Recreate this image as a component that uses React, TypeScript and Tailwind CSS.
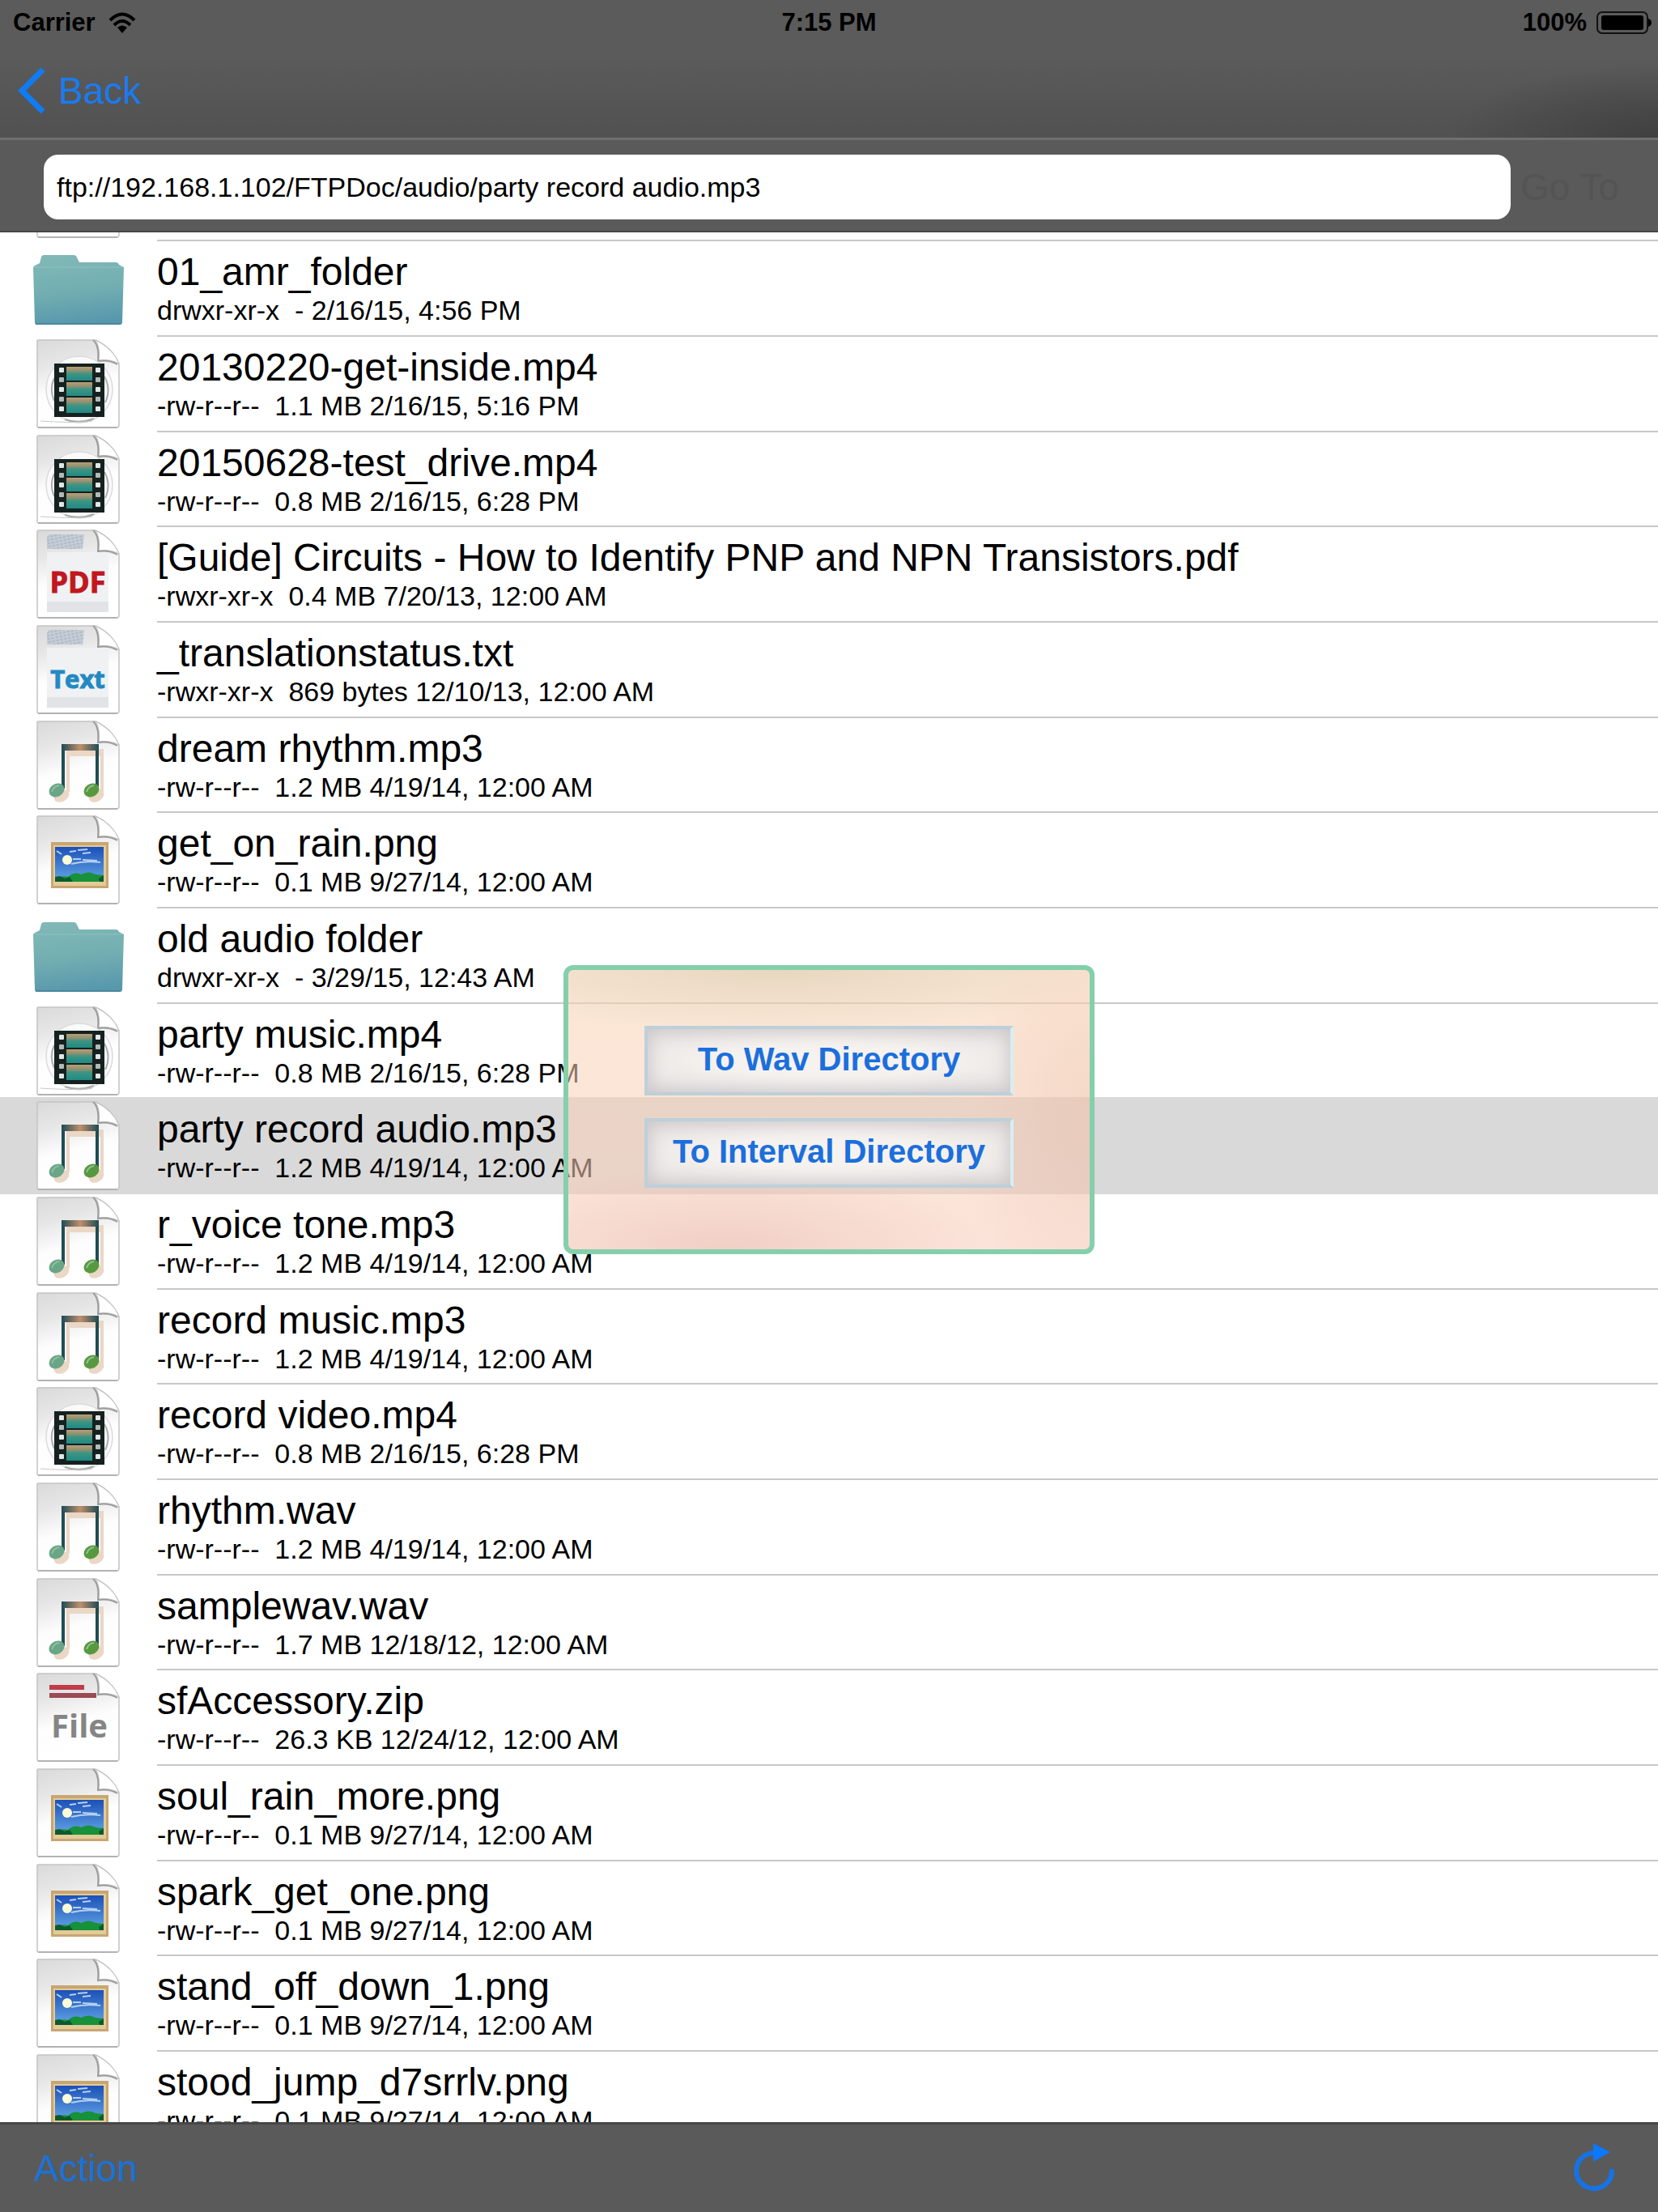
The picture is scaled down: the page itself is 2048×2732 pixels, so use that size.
import { useState } from "react";

type Kind = "folder" | "video" | "pdf" | "text" | "audio" | "image" | "file";

interface FileEntry {
  name: string;
  info: string;
  kind: Kind;
}

const files: FileEntry[] = [
  { name: "01_amr_folder", info: "drwxr-xr-x  - 2/16/15, 4:56 PM", kind: "folder" },
  { name: "20130220-get-inside.mp4", info: "-rw-r--r--  1.1 MB 2/16/15, 5:16 PM", kind: "video" },
  { name: "20150628-test_drive.mp4", info: "-rw-r--r--  0.8 MB 2/16/15, 6:28 PM", kind: "video" },
  {
    name: "[Guide] Circuits - How to Identify PNP and NPN Transistors.pdf",
    info: "-rwxr-xr-x  0.4 MB 7/20/13, 12:00 AM",
    kind: "pdf",
  },
  { name: "_translationstatus.txt", info: "-rwxr-xr-x  869 bytes 12/10/13, 12:00 AM", kind: "text" },
  { name: "dream rhythm.mp3", info: "-rw-r--r--  1.2 MB 4/19/14, 12:00 AM", kind: "audio" },
  { name: "get_on_rain.png", info: "-rw-r--r--  0.1 MB 9/27/14, 12:00 AM", kind: "image" },
  { name: "old audio folder", info: "drwxr-xr-x  - 3/29/15, 12:43 AM", kind: "folder" },
  { name: "party music.mp4", info: "-rw-r--r--  0.8 MB 2/16/15, 6:28 PM", kind: "video" },
  { name: "party record audio.mp3", info: "-rw-r--r--  1.2 MB 4/19/14, 12:00 AM", kind: "audio" },
  { name: "r_voice tone.mp3", info: "-rw-r--r--  1.2 MB 4/19/14, 12:00 AM", kind: "audio" },
  { name: "record music.mp3", info: "-rw-r--r--  1.2 MB 4/19/14, 12:00 AM", kind: "audio" },
  { name: "record video.mp4", info: "-rw-r--r--  0.8 MB 2/16/15, 6:28 PM", kind: "video" },
  { name: "rhythm.wav", info: "-rw-r--r--  1.2 MB 4/19/14, 12:00 AM", kind: "audio" },
  { name: "samplewav.wav", info: "-rw-r--r--  1.7 MB 12/18/12, 12:00 AM", kind: "audio" },
  { name: "sfAccessory.zip", info: "-rw-r--r--  26.3 KB 12/24/12, 12:00 AM", kind: "file" },
  { name: "soul_rain_more.png", info: "-rw-r--r--  0.1 MB 9/27/14, 12:00 AM", kind: "image" },
  { name: "spark_get_one.png", info: "-rw-r--r--  0.1 MB 9/27/14, 12:00 AM", kind: "image" },
  { name: "stand_off_down_1.png", info: "-rw-r--r--  0.1 MB 9/27/14, 12:00 AM", kind: "image" },
  { name: "stood_jump_d7srrlv.png", info: "-rw-r--r--  0.1 MB 9/27/14, 12:00 AM", kind: "image" },
];

// gradients shared by all the file icons
function IconDefs() {
  return (
    <svg className="absolute h-0 w-0" aria-hidden="true">
      <defs>
        <linearGradient id="page" x1="0" y1="0" x2="0.25" y2="1">
          <stop offset="0" stopColor="#dadada" />
          <stop offset="0.3" stopColor="#e6e6e6" />
          <stop offset="0.62" stopColor="#fdfdfd" />
          <stop offset="1" stopColor="#ffffff" />
        </linearGradient>
        <linearGradient id="folder" x1="0.4" y1="0" x2="0.55" y2="1">
          <stop offset="0" stopColor="#80b8b6" />
          <stop offset="0.5" stopColor="#72aeb1" />
          <stop offset="1" stopColor="#5797ad" />
        </linearGradient>
        <linearGradient id="frame" x1="0" y1="0" x2="0" y2="1">
          <stop offset="0" stopColor="#b99f78" />
          <stop offset="0.3" stopColor="#8f9070" />
          <stop offset="0.5" stopColor="#3f9583" />
          <stop offset="1" stopColor="#1f8a85" />
        </linearGradient>
        <linearGradient id="beam" x1="0" y1="0" x2="1" y2="0">
          <stop offset="0" stopColor="#1d4a56" />
          <stop offset="0.5" stopColor="#c08f6c" />
          <stop offset="1" stopColor="#1d4a56" />
        </linearGradient>
        <linearGradient id="sky" x1="0" y1="0" x2="0" y2="1">
          <stop offset="0" stopColor="#1c50b8" />
          <stop offset="1" stopColor="#63a6e6" />
        </linearGradient>
        <pattern id="print" width="5" height="4" patternUnits="userSpaceOnUse" patternTransform="rotate(-12)">
          <rect width="5" height="4" fill="#c4ccd5" />
          <rect width="3" height="2" fill="#b0bac6" />
        </pattern>
      </defs>
    </svg>
  );
}

function Page() {
  return (
    <>
      <path
        d="M7 1H78Q98 10 107 30V106Q107 109 104 109H8Q6 109 6 107V2Q6 1 7 1Z"
        fill="url(#page)"
        stroke="#c4c4c4"
        strokeWidth="1.5"
      />
      <path d="M7 109H105" stroke="#b2b2b2" strokeWidth="2" />
      <path d="M78 1Q84 10 82 26Q96 24 107 30Q100 12 78 1Z" fill="#ffffff" stroke="#c0c0c0" strokeWidth="1" />
      <path d="M75 1Q83 8 81 27Q95 25 105 31" fill="none" stroke="#9c9c9c" strokeWidth="2" />
    </>
  );
}

function Film() {
  return (
    <>
      <circle cx="58" cy="62" r="41" fill="#fafafa" stroke="#dcdcdc" strokeWidth="1.5" />
      <path d="M27 48a33 33 0 0 0 0 28M89 46a34 34 0 0 1 1 32M40 99q18 6 36-1" fill="none" stroke="#a9adab" strokeWidth="2" />
      <path d="M10 101Q58 104 74 101" fill="none" stroke="#c9c9c9" />
      <rect x="27" y="30" width="62" height="66" fill="#14211f" />
      <rect x="42" y="34" width="32" height="17" fill="url(#frame)" />
      <rect x="42" y="53" width="32" height="17" fill="url(#frame)" />
      <rect x="42" y="72" width="32" height="19" fill="url(#frame)" />
      {[35, 47, 59, 71, 83].map((y, i) => (
        <g key={y} fill={i % 2 ? "#b4b8b7" : "#e4e6e6"}>
          <rect x="33" y={y} width="6" height="6" rx="1" />
          <rect x="78" y={y} width="6" height="6" rx="1" />
        </g>
      ))}
    </>
  );
}

function Notes() {
  return (
    <>
      <g fill="#ead7c5">
        <path d="M42 35H88V44H46V88H42ZM84 35H88V88H84Z" />
        <ellipse cx="36" cy="93" rx="10" ry="7" transform="rotate(-28 36 93)" />
        <ellipse cx="79" cy="93" rx="10" ry="7" transform="rotate(-28 79 93)" />
      </g>
      <path d="M36 29H40V84H36ZM78 29H82V84H78Z" fill="#1f4d55" />
      <rect x="36" y="29" width="46" height="8" fill="url(#beam)" />
      <ellipse cx="30" cy="86" rx="10" ry="8" transform="rotate(-32 30 86)" fill="#69a587" />
      <ellipse cx="73" cy="86" rx="10" ry="8" transform="rotate(-32 73 86)" fill="#58993f" />
      <path d="M24 88q2-7 9-8M67 88q2-7 9-8" fill="none" stroke="#8fc09c" strokeWidth="2" />
    </>
  );
}

function Painting() {
  return (
    <>
      <rect x="23" y="33" width="71" height="57" fill="#c8a672" />
      <rect x="26" y="37" width="65" height="50" fill="#e3cb98" />
      <rect x="28" y="39" width="60" height="43" fill="url(#sky)" />
      <path
        d="M46 45L54 44M56 43L68 42M62 47L72 46M50 54H60M48 60Q64 56 84 58M62 55L80 56M30 44L36 48"
        fill="none"
        stroke="#b5d0f0"
        strokeWidth="2"
      />
      <circle cx="43" cy="55" r="6" fill="#fbfbd8" />
      <path d="M28 78Q36 74 44 76Q52 69 60 73Q70 68 78 73L88 74V82H28Z" fill="#17913a" />
      <path d="M28 76L34 75L40 78L46 76L50 82H28ZM82 78L88 74V82H83Z" fill="#0c5a2b" />
    </>
  );
}

function TextPanel() {
  return (
    <>
      <path d="M20 6H64L62 24H18V10Z" fill="url(#print)" />
      <rect x="18" y="28" width="76" height="74" fill="#f0f1f3" />
      <rect x="18" y="89" width="76" height="13" fill="#e1e3e6" />
    </>
  );
}

function FileIcon({ kind }: { kind: Kind }) {
  return (
    <svg
      viewBox="0 0 114 110"
      className="h-[110px] w-[114px] shrink-0 font-['Open_Sans','Noto_Sans',sans-serif] font-bold"
      aria-hidden="true"
    >
      {kind === "folder" ? (
        <>
          <path
            d="M9 24L11 16Q12 14 14 14H51Q54 14 55 17L58 23H103Q106 23 107 26L113 29L111 97Q111 100 108 100H6Q3 100 3 97L1 30Q1 28 3 27Z"
            fill="url(#folder)"
          />
          <path d="M3 29H111" stroke="#8cc3c0" strokeWidth="1" />
          <path d="M4 99H109" stroke="#4b879b" strokeWidth="2" />
        </>
      ) : (
        <Page />
      )}
      {kind === "video" && <Film />}
      {kind === "audio" && <Notes />}
      {kind === "image" && <Painting />}
      {kind === "pdf" && (
        <>
          <TextPanel />
          <text x="56" y="78" textAnchor="middle" fill="#c01820" stroke="#c01820" className="text-[36px]">
            PDF
          </text>
        </>
      )}
      {kind === "text" && (
        <>
          <TextPanel />
          <text x="56" y="78" textAnchor="middle" fill="#2389c2" stroke="#2389c2" className="text-[31px]">
            Text
          </text>
        </>
      )}
      {kind === "file" && (
        <>
          <rect x="21" y="15" width="43" height="6" fill="#c03c49" />
          <rect x="21" y="25" width="58" height="6" fill="#9c4a54" />
          <text x="58" y="80" textAnchor="middle" fill="#858585" className="text-[40px]">
            File
          </text>
        </>
      )}
    </svg>
  );
}

function StatusBar() {
  return (
    <div className="grid grid-cols-3 items-center px-4 pt-2 text-[31px] leading-10 font-bold text-black">
      <div className="flex items-center gap-4">
        Carrier
        <svg viewBox="0 0 34 26" className="h-[26px] w-[34px]" aria-hidden="true">
          <path d="M2 10Q17 -5 32 10M7 16Q17 6 27 16" fill="none" stroke="#000" strokeWidth="4" />
          <path d="M11 19Q17 14 23 19L17 26Z" fill="#000" />
        </svg>
      </div>
      <div className="text-center">7:15 PM</div>
      <div className="-mr-2 flex items-center justify-end gap-3">
        100%
        <svg viewBox="0 0 68 28" className="h-[28px] w-[68px]" aria-hidden="true">
          <rect x="1" y="1" width="62" height="26" rx="6" fill="none" stroke="#111" strokeWidth="2" />
          <rect x="6" y="5" width="52" height="18" rx="3" fill="#000" />
          <path d="M64 9Q68 10 68 14T64 19Z" fill="#000" />
        </svg>
      </div>
    </div>
  );
}

export default function App() {
  const [url, setUrl] = useState("ftp://192.168.1.102/FTPDoc/audio/party record audio.mp3");
  const [selected, setSelected] = useState("party record audio.mp3");

  return (
    <div className="relative flex h-screen flex-col overflow-hidden bg-white font-['Liberation_Sans',Arial,sans-serif] text-black">
      <IconDefs />

      <header className="flex h-[173px] shrink-0 flex-col border-b-3 border-[#707070] bg-[radial-gradient(ellipse_260px_90px_at_100%_100%,#404040,transparent),linear-gradient(#5b5b5b_40%,#515151)]">
        <StatusBar />
        <button type="button" className="mt-8 ml-5 flex items-center gap-4 self-start text-[46px] leading-14 text-[#1a7bf0]">
          <svg viewBox="0 0 36 64" className="h-[64px] w-[36px]" aria-hidden="true">
            <path d="M33 6L7 32L33 58" fill="none" stroke="#0f7cf5" strokeWidth="7" />
          </svg>
          Back
        </button>
      </header>

      <div className="flex h-[114px] shrink-0 items-center gap-3 border-b-2 border-[#474747] bg-[#5a5a5a] pt-1 pr-12 pl-[54px]">
        <input
          type="text"
          aria-label="Address"
          value={url}
          onChange={(e) => setUrl(e.target.value)}
          className="h-20 min-w-0 flex-1 rounded-[18px] bg-white px-4 text-[34px] text-black outline-none"
        />
        <button type="button" disabled className="text-[46px] leading-14 text-[#545454]">
          Go To
        </button>
      </div>

      <main className="min-h-0 flex-1 overflow-hidden">
        {/* tail of the row that is scrolled under the address bar */}
        <div className="flex h-[11px] items-end overflow-hidden pl-10">
          <div className="w-[154px] shrink-0 pb-1">
            <FileIcon kind="image" />
          </div>
          <div className="flex-1 self-stretch border-b-2 border-[#c8c8c8]" />
        </div>
        <ul>
          {files.map((file) => (
            <li
              key={file.name}
              onClick={() => setSelected(file.name)}
              className={
                file.name === selected
                  ? "relative -mt-[2px] flex h-[120px] bg-[#d9d9d9] pt-[2px] pl-10"
                  : "flex h-[118px] pl-10 nth-[3n]:h-[117px]"
              }
            >
              <div className="w-[154px] shrink-0 pt-[3px]">
                <FileIcon kind={file.kind} />
              </div>
              <div
                className={
                  file.name === selected
                    ? "min-w-0 flex-1 pt-[10px]"
                    : "min-w-0 flex-1 border-b-2 border-[#c8c8c8] pt-[10px]"
                }
              >
                <p className="text-[48px] leading-14 whitespace-pre">{file.name}</p>
                <p className="text-[34px] leading-[38px] whitespace-pre">{file.info}</p>
              </div>
            </li>
          ))}
        </ul>
      </main>

      <footer className="flex h-[111px] shrink-0 items-center justify-between border-t-3 border-[#474747] bg-[#5a5a5a] pr-[52px] pl-[42px]">
        <button type="button" className="text-[46px] leading-14 text-[#1a72d8]">
          Action
        </button>
        <button type="button" aria-label="Reload">
          <svg viewBox="0 0 52 64" className="h-[64px] w-[52px]" aria-hidden="true">
            <path d="M25 13A22 22 0 1 0 47 33" fill="none" stroke="#1673e6" strokeWidth="6" />
            <path d="M24 1L45 12L24 24Z" fill="#0a78ff" />
          </svg>
        </button>
      </footer>

      <div className="pointer-events-none absolute inset-0 flex items-center justify-center pt-2">
        <div
          role="dialog"
          aria-label="Convert"
          className="pointer-events-auto flex w-[656px] flex-col gap-7 rounded-xl border-6 border-[#84cfac] bg-[radial-gradient(ellipse_50%_30%_at_30%_100%,rgba(222,170,160,0.35),transparent),radial-gradient(ellipse_70%_22%_at_40%_0%,rgba(205,195,165,0.45),transparent),radial-gradient(ellipse_25%_80%_at_100%_50%,rgba(225,175,155,0.25),transparent),linear-gradient(rgba(249,212,180,0.55),rgba(248,204,186,0.55))] px-[94px] pt-[69px] pb-[76px]"
        >
          {["To Wav Directory", "To Interval Directory"].map((label) => (
            <button
              key={label}
              type="button"
              className="h-[86px] border-4 border-[#bcd0da] border-r-[#d8eef2] bg-[radial-gradient(ellipse_at_center,#f6f2ef_40%,#e6e2e1)] pb-1 text-[40px] leading-12 font-bold text-[#1b6fdc] shadow-[inset_0_0_20px_4px_rgba(188,182,186,0.6)]"
            >
              {label}
            </button>
          ))}
        </div>
      </div>
    </div>
  );
}
